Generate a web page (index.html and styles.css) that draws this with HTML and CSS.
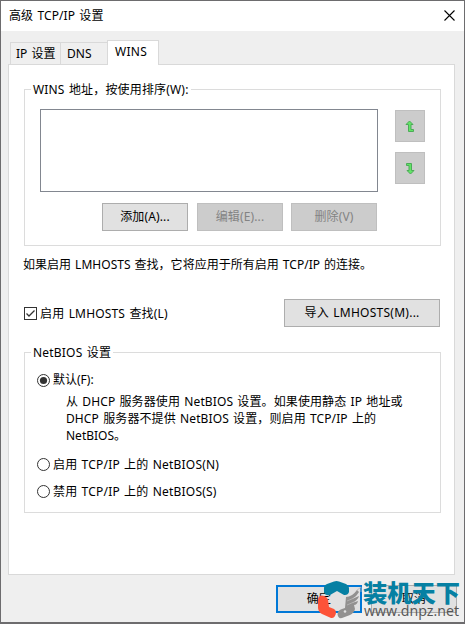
FILE: index.html
```html
<!DOCTYPE html>
<html lang="zh-CN">
<head>
<meta charset="utf-8">
<title>高级 TCP/IP 设置</title>
<link rel="stylesheet" href="styles.css">
</head>
<body>
<div class="window">
  <header class="titlebar">
    <span class="t-title">高级 TCP/IP 设置</span>
    <svg class="close" width="11" height="11" viewBox="0 0 11 11"><path d="M.5 .5l10 10M10.5 .5l-10 10" fill="none" stroke="#000" stroke-width="1.1"/></svg>
  </header>
  <nav class="tabs">
    <div class="tab tab-ip"><span>IP 设置</span></div>
    <div class="tab tab-dns"><span>DNS</span></div>
    <div class="tab tab-wins"><span>WINS</span></div>
  </nav>
  <main class="panel">
    <section class="group group-wins">
      <h2 class="legend"><span class="t-wins">WINS 地址，按使用排序(W):</span></h2>
      <div class="list-row">
        <div class="listbox"></div>
        <div class="arrows">
          <button class="btn off arrow"><svg width="10" height="13" viewBox="0 0 10 13"><path d="M4.5 1L8 4.5H6V9.5H8.5V11.5H3.5V4.5H1Z" fill="#62e466" stroke="#4cab58"/></svg></button>
          <button class="btn off arrow"><svg width="10" height="13" viewBox="0 0 10 13"><path d="M1.5 1.5H6.5V8.5H9L5.5 12L2 8.5H4V3.5H1.5Z" fill="#62e466" stroke="#4cab58"/></svg></button>
        </div>
      </div>
      <div class="actions">
        <button class="btn">添加(A)...</button>
        <button class="btn off">编辑(E)...</button>
        <button class="btn off last">删除(V)</button>
      </div>
    </section>
    <p class="note"><span class="t-note">如果启用 LMHOSTS 查找，它将应用于所有启用 TCP/IP 的连接。</span></p>
    <div class="lmhosts">
      <label class="option"><svg width="13" height="13" viewBox="0 0 13 13"><rect x=".5" y=".5" width="12" height="12" fill="#fff" stroke="#333"/><path d="M2.5 6.5L5 9L10.5 3.5" fill="none" stroke="#333" stroke-width="1.3"/></svg><span class="t-check">启用 LMHOSTS 查找(L)</span></label>
      <button class="btn import"><span class="t-import">导入 LMHOSTS(M)...</span></button>
    </div>
    <section class="group group-netbios">
      <h2 class="legend"><span class="t-netbios">NetBIOS 设置</span></h2>
      <label class="option"><svg width="13" height="13" viewBox="0 0 13 13"><circle cx="6.5" cy="6.5" r="6" fill="#fff" stroke="#333"/><circle cx="6.5" cy="6.5" r="3.6" fill="#333"/></svg><span>默认(F):</span></label>
      <p class="desc"><span class="t-d1">从 DHCP 服务器使用 NetBIOS 设置。如果使用静态 IP 地址或</span><br><span class="t-d2">DHCP 服务器不提供 NetBIOS 设置，则启用 TCP/IP 上的</span><br><span class="t-d3">NetBIOS。</span></p>
      <label class="option"><svg width="13" height="13" viewBox="0 0 13 13"><circle cx="6.5" cy="6.5" r="6" fill="#fff" stroke="#333"/></svg><span class="t-radio">启用 TCP/IP 上的 NetBIOS(N)</span></label>
      <label class="option"><svg width="13" height="13" viewBox="0 0 13 13"><circle cx="6.5" cy="6.5" r="6" fill="#fff" stroke="#333"/></svg><span class="t-radio">禁用 TCP/IP 上的 NetBIOS(S)</span></label>
    </section>
  </main>
  <footer class="footer">
    <button class="btn ok">确定</button>
    <button class="btn cancel">取消</button>
  </footer>
  <svg class="mark" width="150" height="46" viewBox="315 577 150 46">
    <path d="M324 592V588Q324 585 327 584L334 581.4Q336.500 580.6 339 581.4L346 584Q349 585.500 349 588V592Q348 595.500 344 595L337 591L330 595Q325 596 324 592Z" fill="#0680a3"/>
    <path d="M318 600Q318 595.500 322 595.500Q327 596 328 600L329 607L334 609Q336 610 336 613Q335 618.500 331 618L322 614Q318.500 612 318 608Z" fill="#fd5338"/>
    <path d="M337.500 614Q338 610 342 609L345 608L346 597Q352 597 357 590L359 592Q357 596 352 599L359 596Q358 600 352 603L358 601Q357 605 354 605L355 609Q354 613 350 615L342 618Q338 619 337.500 614Z" fill="#929190"/>
    <path d="M356 591L361 587V592M347 601L354 598M347 605L354 602" fill="none" stroke="#b9b8b7" stroke-width=".8"/>
    <circle cx="345" cy="611.500" r="1.300" fill="#e1e1e1"/>
    <text class="mark-cn" x="363" y="601.500" textLength="97" lengthAdjust="spacingAndGlyphs">装机天下</text>
    <text class="mark-url" x="364" y="616" textLength="95" lengthAdjust="spacingAndGlyphs">www.dnpz.net</text>
  </svg>
</div>
</body>
</html>
```

FILE: styles.css
```css
* { box-sizing: border-box; }
body {
  margin: 0;
  background: #6d6c6e;
  color: #000;
  font: 12px/18px "Noto Sans", "Noto Sans CJK SC", sans-serif;
}
.window {
  position: relative;
  width: 465px;
  height: 623px;
  border: 1px solid #6d6c6e;
  background: #efefef;
  white-space: nowrap;
  overflow: hidden;
}
.titlebar {
  display: flex;
  justify-content: space-between;
  align-items: center;
  height: 30px;
  padding: 0 9px 0 8px;
  background: #fff;
}
.close { margin-bottom: 2px; }
.tabs {
  display: flex;
  align-items: flex-end;
  height: 33px;
  padding-left: 9px;
}
.tab {
  height: 22px;
  padding-top: 2px;
  border: 1px solid #d9d9d9;
  border-bottom: 0;
}
.tab-ip { width: 50px; padding-left: 5px; border-right: 0; word-spacing: 1px; }
.tab-dns { width: 47px; padding-left: 6px; border-right: 0; }
.tab-wins {
  position: relative;
  z-index: 1;
  width: 52px;
  height: 25px;
  margin-bottom: -1px;
  padding-left: 7px;
  background: #fff;
  letter-spacing: .3px;
}
.panel {
  width: 447px;
  height: 511px;
  margin-left: 7px;
  padding: 24px 13px 0 15px;
  border: 1px solid #d9d9d9;
  background: #fff;
}
.group {
  width: 417px;
  border: 1px solid #dcdcdc;
}
.group-wins { height: 157px; padding: 0 15px; }
.group-netbios { height: 161px; margin-top: 25px; padding: 0 12px; }
.legend {
  width: max-content;
  height: 18px;
  margin: -9px 0 0 -9px;
  padding: 0 2px;
  background: #fff;
  font: inherit;
}
.group-netbios .legend { margin-left: -6px; }
.list-row {
  display: flex;
  justify-content: space-between;
  margin-top: 10px;
}
.listbox { width: 338px; height: 83px; border: 1px solid #828790; }
.arrows {
  display: flex;
  flex-direction: column;
  gap: 10px;
  padding-top: 1px;
}
.btn {
  display: flex;
  justify-content: center;
  align-items: center;
  width: 86px;
  height: 28px;
  padding: 0;
  border: 1px solid #adadad;
  background: #e1e1e1;
  color: #000;
  font: inherit;
  letter-spacing: .15px;
}
.off { border-color: #bfbfbf; background: #ccc; color: #838383; }
.arrow { width: 30px; height: 32px; }
.actions { display: flex; gap: 9px; margin: 11px 0 0 62px; }
.last { margin-left: -1px; }
.note { margin: 10px 0 0 -1px; height: 17px; }
.lmhosts {
  display: flex;
  justify-content: space-between;
  align-items: center;
  margin-top: 26px;
  padding-right: 1px;
}
.import { width: 156px; }
.option { display: flex; align-items: center; gap: 3px; height: 18px; }
.group-netbios .option { margin-top: 9px; }
.desc { margin: 4px 0 11px 29px; line-height: 17px; }
.footer { display: flex; gap: 9px; padding: 10px 0 0 275px; }
.ok { border: 2px solid #0078d7; }
.mark { position: absolute; left: 314px; top: 576px; }
.mark-cn { fill: #0680a3; font: 900 24px "Noto Sans CJK SC", sans-serif; }
.mark-url { fill: #555; font: 14px "Open Sans", sans-serif; }

.t-title { letter-spacing: .1px; word-spacing: 1px; }
.t-wins { letter-spacing: .17px; word-spacing: 1px; }
.t-note { letter-spacing: .03px; word-spacing: .8px; }
.t-check { padding-top: 1px; letter-spacing: .17px; word-spacing: 1px; }
.t-import { letter-spacing: .25px; word-spacing: 1px; }
.t-netbios { letter-spacing: .2px; word-spacing: 1px; }
.t-d1, .t-d2 { letter-spacing: .11px; word-spacing: 1px; }
.t-radio { padding-top: 1px; letter-spacing: .2px; word-spacing: .9px; }
```
